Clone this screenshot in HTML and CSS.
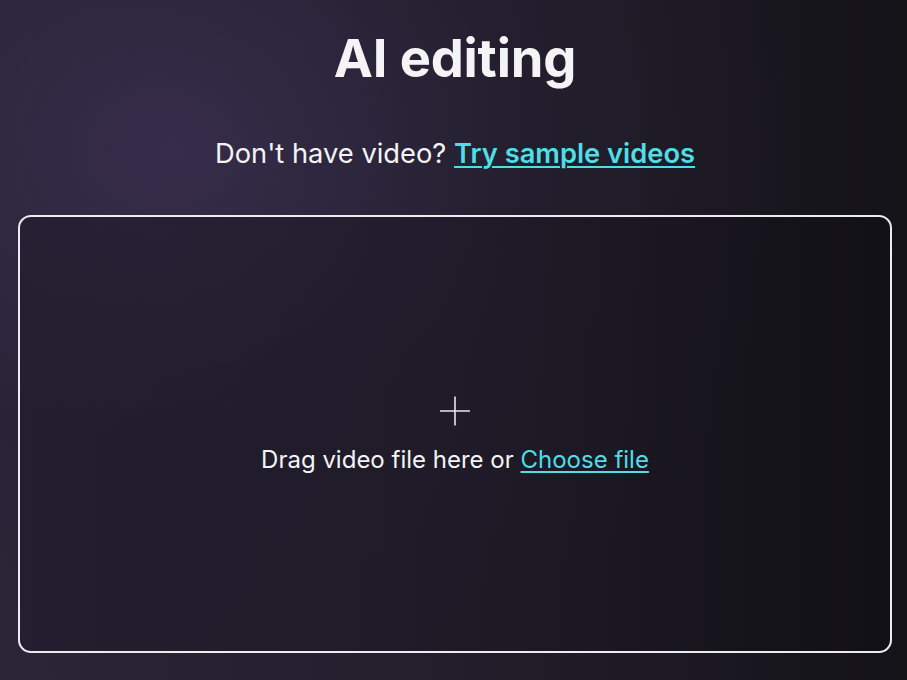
FILE: index.html
```html
<!DOCTYPE html>
<html lang="en">
<head>
<meta charset="utf-8">
<title>AI editing</title>
<link rel="stylesheet" href="styles.css">
</head>
<body>
<main class="page">
  <h1 class="title">AI editing</h1>
  <p class="subtitle">Don't have video? <a class="link link-strong" href="#">Try sample videos</a></p>
  <section class="dropzone">
    <svg class="plus" width="32" height="32" viewBox="0 0 32 32" aria-hidden="true">
      <path d="M16 1.5V30.5M1 16H31" stroke="#e6e6ea" stroke-width="1.6" fill="none"/>
    </svg>
    <p class="drop-text">Drag video file here or <a class="link" href="#">Choose file</a></p>
  </section>
</main>
</body>
</html>
```
FILE: styles.css
```css
html, body {
  margin: 0;
  height: 100%;
}
body {
  font-family: "Inter", "Noto Sans", sans-serif;
  color: #f4f4f6;
  background-color: #17151c;
  background-image:
    radial-gradient(ellipse 640px 540px at 170px 150px, rgba(58, 47, 80, 0.8), rgba(40, 33, 54, 0.4) 55%, rgba(23, 21, 28, 0) 100%),
    linear-gradient(90deg, #2b2538 0%, #221e2b 50%, #141318 100%);
  overflow: hidden;
}
.page {
  display: flex;
  flex-direction: column;
  align-items: center;
  padding: 0 15px 0 18px;
  height: 100%;
  box-sizing: border-box;
}
.title {
  margin: 27px 0 0;
  font-size: 52.5px;
  font-weight: 700;
  line-height: 62px;
  letter-spacing: -0.2px;
}
.subtitle {
  margin: 48px 0 0;
  font-size: 27.3px;
  line-height: 34px;
  font-weight: 400;
}
.link {
  color: #4fdde6;
  text-decoration: underline;
  text-underline-offset: 3px;
  text-decoration-thickness: 2px;
}
.link-strong {
  font-weight: 600;
}
.dropzone {
  margin-top: 44px;
  align-self: stretch;
  height: 438px;
  box-sizing: border-box;
  border: 2px solid #ececf0;
  border-radius: 13px;
  background: linear-gradient(90deg, rgba(30, 25, 40, 0.55) 0%, rgba(25, 22, 32, 0.5) 60%, rgba(16, 15, 20, 0.6) 100%);
  display: flex;
  flex-direction: column;
  align-items: center;
  justify-content: center;
  gap: 18px;
  padding-top: 2px;
}
.plus {
  display: block;
}
.drop-text {
  margin: 0;
  font-size: 24px;
  line-height: 30px;
}
.drop-text .link {
  text-decoration-thickness: 1.5px;
}
```
